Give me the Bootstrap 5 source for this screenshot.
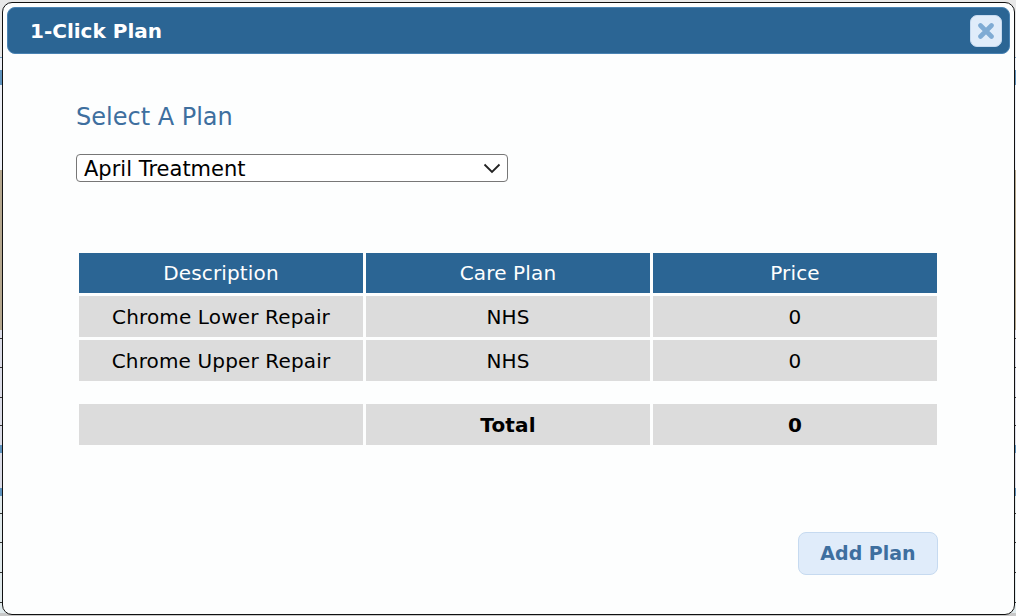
<!DOCTYPE html>
<html lang="en">
<head>
<meta charset="UTF-8">
<title>1-Click Plan</title>
<link href="https://cdn.jsdelivr.net/npm/bootstrap@5.3.1/dist/css/bootstrap.min.css" rel="stylesheet">
<style>
  html, body { height: 100%; }
  body {
    font-family: "DejaVu Sans", "Liberation Sans", sans-serif;
    background-color: #dcdde8;
    /* page dimmed behind the dialog, only a sliver shows at the edges */
    background-image:
      linear-gradient(to bottom,
        transparent 338px, #333 338px, #333 339px, transparent 339px,
        transparent 367px, #333 367px, #333 368px, transparent 368px,
        transparent 397px, #333 397px, #333 398px, transparent 398px,
        transparent 425px, #333 425px, #333 426px, transparent 426px,
        transparent 513px, #333 513px, #333 514px, transparent 514px,
        transparent 542px, #333 542px, #333 543px, transparent 543px,
        transparent 572px, #333 572px, #333 573px, transparent 573px,
        transparent 602px, #333 602px, #333 603px, transparent 603px),
      linear-gradient(to bottom,
        #e8e8e8 57px, #6d9cc4 57px, #6d9cc4 58px, #eceff6 58px,
        #eceff6 70px, #5f93bd 70px, #5f93bd 85px, #eceff6 85px,
        #eceff6 170px, #b5a88f 170px, #b5a88f 330px, #dcdde8 330px,
        #dcdde8 445px, #5f93bd 445px, #5f93bd 453px, #dcdde8 453px,
        #dcdde8 488px, #5f93bd 488px, #5f93bd 496px, #e0eaec 496px,
        #e0eaec 613px, #c8c8c8 613px);
    padding: 2px 1px 1px 2px;
    overflow: hidden;
  }
  .plan_dialog {
    height: 613px;
    background: #fdfefe;
    border: 1px solid #111;
    border-radius: 10px;
    padding: 4px;
  }
  .plan_header {
    height: 47px;
    background: #2b6594;
    border: 1px solid #4a83b3;
    border-radius: 8px;
    padding: 0 7px 0 22px;
    color: #fff;
    font-size: 20px;
    font-weight: 700;
  }
  .plan_close {
    width: 32px;
    height: 32px;
    padding: 0;
    background: #e0ecfa;
    border: 1px solid #c6daf0;
    border-radius: 7px;
  }
  .plan_body { padding: 48px 75px 0 69px; }
  .plan_title {
    color: #3e6f9f;
    font-size: 24px;
    font-weight: 400;
    line-height: 30px;
    margin-bottom: 22px;
  }
  .plan_select {
    width: 432px;
    height: 28px;
    padding: 1px 7px 0;
    font-size: 21px;
    line-height: 26px;
    color: #000;
    background: #fff;
    border: 1px solid #777;
    border-radius: 4px;
  }
  .plan_select svg { margin-right: -1px; }
  .plan_table {
    width: calc(100% + 5px);
    margin: 68px 0 0 0;
    border-collapse: separate;
    border-spacing: 3px;
    table-layout: fixed;
    font-size: 20px;
    letter-spacing: .15px;
    text-align: center;
  }
  .plan_table th, .plan_table td {
    height: 41px;
    padding: 0;
    vertical-align: middle;
    background: #dcdcdc;
    color: #000;
    border: 0;
  }
  .plan_table thead th {
    height: 40px;
    background: #2b6594;
    color: #fff;
    font-weight: 400;
  }
  .plan_table .plan_gap td { height: 17px; background: transparent; }
  .plan_add {
    width: 140px;
    height: 43px;
    margin: 84px -3px 0 0;
    padding: 0;
    background: #e0ecfa;
    border: 1px solid #c6daf0;
    border-radius: 8px;
    color: #3e6f9f;
    font-size: 19px;
    font-weight: 700;
  }
</style>
</head>
<body>
<div class="plan_dialog">
  <div class="plan_header d-flex align-items-center justify-content-between">
    <span>1-Click Plan</span>
    <button type="button" class="plan_close d-flex align-items-center justify-content-center" aria-label="Close">
      <svg width="16" height="16" viewBox="0 0 16 16"><path d="M2.5 2.5 13.5 13.5M13.5 2.5 2.5 13.5" stroke="#7fabd4" stroke-width="4.6" stroke-linecap="round"/></svg>
    </button>
  </div>
  <div class="plan_body">
    <div class="plan_title">Select A Plan</div>
    <div class="plan_select d-flex align-items-center justify-content-between">
      <span>April Treatment</span>
      <svg width="18" height="11" viewBox="0 0 18 11"><path d="M1.5 1.5 9 9l7.5-7.5" fill="none" stroke="#222" stroke-width="1.8"/></svg>
    </div>
    <table class="table plan_table">
      <thead>
        <tr><th>Description</th><th>Care Plan</th><th>Price</th></tr>
      </thead>
      <tbody>
        <tr><td>Chrome Lower Repair</td><td>NHS</td><td>0</td></tr>
        <tr><td>Chrome Upper Repair</td><td>NHS</td><td>0</td></tr>
        <tr class="plan_gap"><td colspan="3"></td></tr>
        <tr class="fw-bold"><td></td><td>Total</td><td>0</td></tr>
      </tbody>
    </table>
    <div class="d-flex justify-content-end">
      <button type="button" class="plan_add">Add Plan</button>
    </div>
  </div>
</div>
<script src="https://cdn.jsdelivr.net/npm/bootstrap@5.3.1/dist/js/bootstrap.bundle.min.js"></script>
</body>
</html>
